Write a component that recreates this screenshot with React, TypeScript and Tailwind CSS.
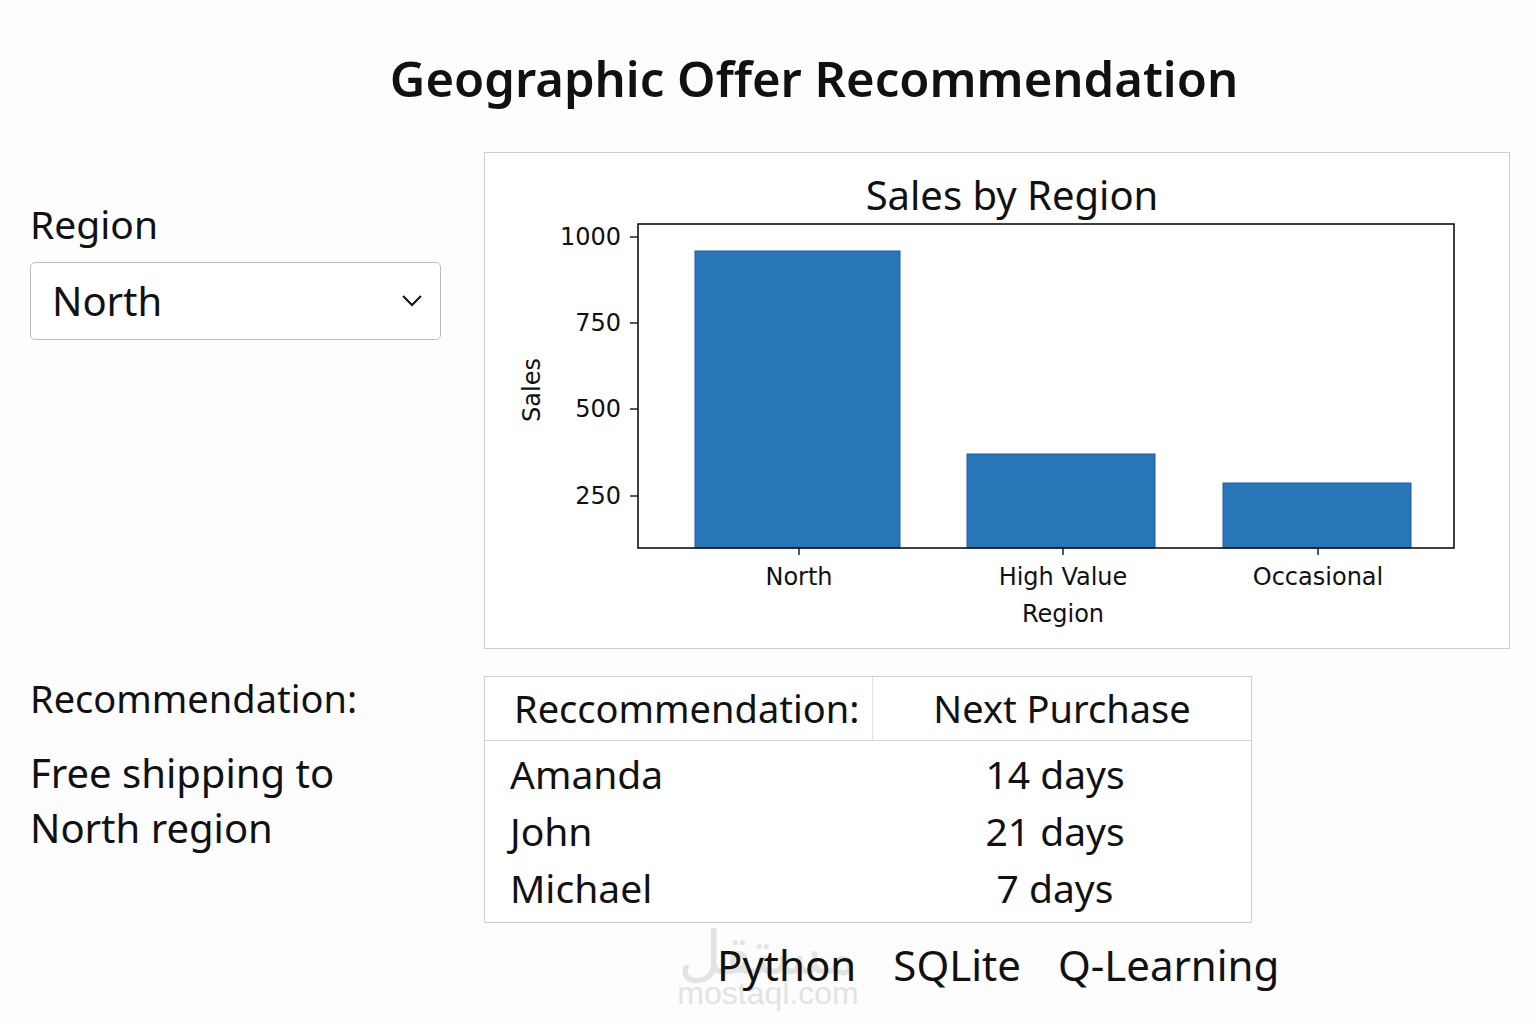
import React from 'react';

const sans = "font-['Noto_Sans','Open_Sans',sans-serif]";

const bars = [
  { label: 'North', x: 210, w: 205, top: 98, tick: 314 },
  { label: 'High Value', x: 482, w: 188, top: 301, tick: 578 },
  { label: 'Occasional', x: 738, w: 188, top: 330, tick: 833 },
];

const yTicks = [
  { v: '1000', y: 84 },
  { v: '750', y: 170 },
  { v: '500', y: 256 },
  { v: '250', y: 343 },
];

const SalesChart: React.FC = () => (
  <svg width="1024" height="495" viewBox="0 0 1024 495">
    <text x="527" y="41" textAnchor="middle" dominantBaseline="central" fontSize="40" fill="#111" fontFamily="'Noto Sans', sans-serif">
      Sales by Region
    </text>
    {bars.map((b) => (
      <rect key={b.label} x={b.x} y={b.top} width={b.w} height={395 - b.top} fill="#2875b8" stroke="#1d5fa8" strokeWidth="1" />
    ))}
    <rect x="153" y="71" width="816" height="324" fill="none" stroke="#111" strokeWidth="1.6" />
    {yTicks.map((t) => (
      <g key={t.v}>
        <line x1="145" x2="153" y1={t.y} y2={t.y} stroke="#111" strokeWidth="1.4" />
        <text x="136" y={t.y} textAnchor="end" dominantBaseline="central" fontSize="24" fill="#111" fontFamily="'DejaVu Sans', sans-serif">
          {t.v}
        </text>
      </g>
    ))}
    {bars.map((b) => (
      <g key={b.label + 't'}>
        <line x1={b.tick} x2={b.tick} y1="395" y2="402" stroke="#111" strokeWidth="1.4" />
        <text x={b.tick} y="424" textAnchor="middle" dominantBaseline="central" fontSize="24" fill="#111" fontFamily="'DejaVu Sans', sans-serif">
          {b.label}
        </text>
      </g>
    ))}
    <text x="578" y="461" textAnchor="middle" dominantBaseline="central" fontSize="24" fill="#111" fontFamily="'DejaVu Sans', sans-serif">
      Region
    </text>
    <text x="0" y="0" transform="translate(47 237) rotate(-90)" textAnchor="middle" dominantBaseline="central" fontSize="24" fill="#111" fontFamily="'DejaVu Sans', sans-serif">
      Sales
    </text>
  </svg>
);

const rows = [
  { name: 'Amanda', days: '14 days' },
  { name: 'John', days: '21 days' },
  { name: 'Michael', days: '7 days' },
];

export default function App() {
  return (
    <div className={`relative w-[1536px] h-[1024px] bg-[#fdfdfd] text-[#111] overflow-hidden ${sans}`}>
      <h1 className="pt-[46px] pl-[92px] text-center text-[49px] font-semibold leading-[64px]">
        Geographic Offer Recommendation
      </h1>

      <div className="flex pl-[30px] mt-[42px]">
        <div className="w-[411px] pt-[46px]">
          <div className="text-[39px] leading-[52px]">Region</div>
          <div className="mt-[12px] h-[78px] flex items-center justify-between rounded-[5px] border border-[#bdbdbd] bg-white pl-[21px] pr-[18px]">
            <span className="text-[40px]">North</span>
            <svg width="20" height="12" viewBox="0 0 20 12" fill="none">
              <polyline points="1,1 10,10 19,1" stroke="#111" strokeWidth="2" />
            </svg>
          </div>
        </div>
        <div className="ml-[43px] w-[1026px] h-[497px] border border-[#cfcfcf] bg-white">
          <SalesChart />
        </div>
      </div>

      <div className="flex pl-[30px] mt-[27px]">
        <div className="w-[411px]">
          <div className="text-[38px] leading-[44px]">Recommendation:</div>
          <div className="mt-[25px] text-[40px] leading-[55px]">
            Free shipping to
            <br />
            North region
          </div>
        </div>
        <div className="ml-[43px] w-[768px] border border-[#cfcfcf] bg-white">
          <div className="flex h-[64px] border-b border-[#d6d6d6]">
            <div className="w-[388px] border-r border-[#e0e0e0] pl-[29px] flex items-center text-[38px]">Reccommendation:</div>
            <div className="flex-1 flex items-center justify-center text-[38px]">Next Purchase</div>
          </div>
          <div className="pt-[5px] pb-[5px]">
            {rows.map((r) => (
              <div key={r.name} className="flex h-[57px] items-center text-[39px]">
                <div className="w-[420px] pl-[25px]">{r.name}</div>
                <div className="w-[300px] text-center">{r.days}</div>
              </div>
            ))}
          </div>
        </div>
      </div>

      <div className="relative mt-[12px] pl-[717px] flex gap-[37px] text-[42px] leading-[60px]">
        <div className="absolute left-[672px] top-[-12px] w-[192px] flex flex-col items-center text-[#e3e3e3] leading-none select-none">
          <span className="text-[60px] font-['DejaVu_Sans',sans-serif]">مستقل</span>
          <span className="text-[32px] font-['Liberation_Sans',sans-serif] -mt-[6px]">mostaql.com</span>
        </div>
        <span className="relative">Python</span>
        <span className="relative">SQLite</span>
        <span className="relative">Q-Learning</span>
      </div>
    </div>
  );
}
